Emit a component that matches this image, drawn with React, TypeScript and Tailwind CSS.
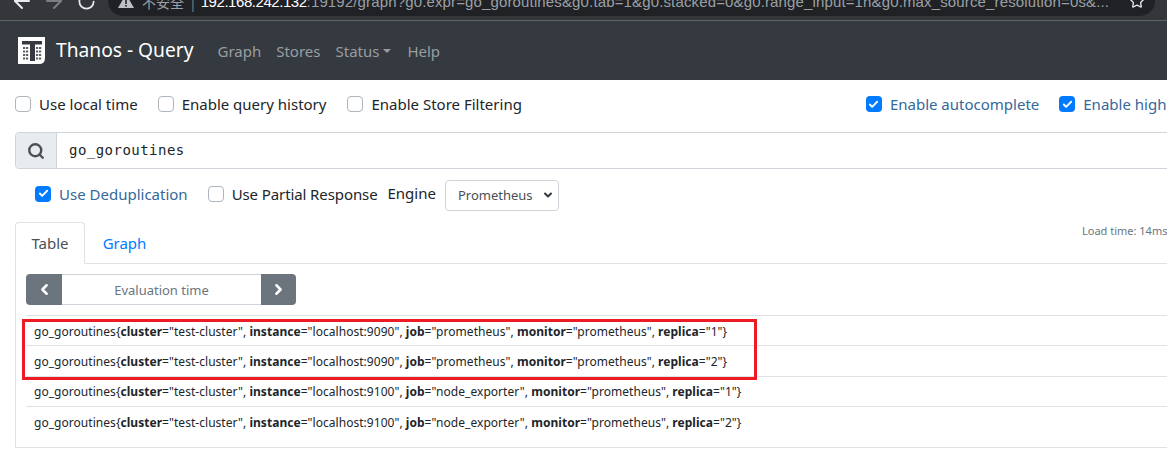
import React from "react";
import { Search, ChevronLeft, ChevronRight, ArrowLeft, ArrowRight, RotateCw, Star, Check, ChevronDown } from "lucide-react";

function Box({ checked, className = "" }: { checked?: boolean; className?: string }) {
  return checked ? (
    <span className={"w-4 h-4 rounded-[4px] bg-[#007bff] flex items-center justify-center shrink-0 " + className}>
      <Check size={11} strokeWidth={4} className="text-white" />
    </span>
  ) : (
    <span className={"w-4 h-4 rounded-[4px] bg-white border border-[#adb5bd] shrink-0 " + className} />
  );
}

function Opt({ label, checked, className = "" }: { label: string; checked?: boolean; className?: string }) {
  return (
    <div className={"flex items-center gap-2 shrink-0 " + className}>
      <Box checked={checked} />
      <span className={"text-[15px] leading-6 whitespace-nowrap " + (checked ? "text-[#35689b]" : "text-[#212529]")}>{label}</span>
    </div>
  );
}

function Row({ inst, job, rep }: { inst: string; job: string; rep: string }) {
  const L = ({ children }: { children: React.ReactNode }) => <b className="font-bold">{children}</b>;
  return (
    <div className="h-[30.4px] pl-[8px] pt-[2px] flex items-center border-t border-[#dee2e6] text-[12px] tracking-[0.04px] text-[#212529] whitespace-nowrap">
      <span>
        go_goroutines{"{"}<L>cluster</L>="test-cluster", <L>instance</L>="{inst}", <L>job</L>="{job}", <L>monitor</L>="prometheus", <L>replica</L>="{rep}"{"}"}
      </span>
    </div>
  );
}

function Logo() {
  return (
    <svg width="27" height="27" viewBox="0 0 27 27" className="shrink-0">
      <path d="M0 0H27V21Q27 27 21 27H0Z" fill="#fff" />
      <rect x="4" y="4" width="20" height="3.5" fill="#343a40" />
      <rect x="12" y="4" width="5" height="20" fill="#343a40" />
      {[10, 13.5, 17, 20.5].map((y) =>
        [5, 8, 18, 21].map((x) => <rect key={x + "-" + y} x={x} y={y} width="2.2" height="2" fill="#5b6066" />)
      )}
    </svg>
  );
}

export default function App() {
  return (
    <div className="w-[1167px] h-[476px] overflow-hidden bg-white flex flex-col font-['Noto_Sans','Open_Sans',sans-serif]">
      {/* browser toolbar, cropped at the top */}
      <div className="h-[21px] shrink-0 bg-[#35363a] border-b border-[#5f6368] overflow-hidden">
        <div className="-mt-[14px] h-[30px] flex items-center">
          <ArrowLeft size={24} strokeWidth={2} className="ml-[10px] shrink-0 text-[#e8eaed]" />
          <ArrowRight size={24} strokeWidth={2} className="ml-[8px] shrink-0 text-[#7b7d80]" />
          <RotateCw size={19} strokeWidth={2.2} className="ml-[11px] shrink-0 text-[#e8eaed]" />
          <div className="ml-[12px] w-[1047px] h-[30px] shrink-0 rounded-[15px] bg-[#202124] flex items-center pl-[10px] whitespace-nowrap overflow-hidden">
            <svg width="16" height="16" viewBox="0 0 16 16" className="shrink-0">
              <path d="M8 1L16 15H0Z" fill="#bdc1c6" />
              <rect x="7.2" y="6" width="1.6" height="5" fill="#202124" />
              <rect x="7.2" y="12" width="1.6" height="1.6" fill="#202124" />
            </svg>
            <span className="ml-[8px] mt-[2px] text-[#9aa0a6] font-['Noto_Sans_CJK_SC',sans-serif] text-[14px]">不安全</span>
            <span className="ml-[5px] mt-[2px] text-[14px] text-[#7b7d80]">|</span>
            <span className="ml-[4px] mt-[3px] text-white font-['Liberation_Sans',sans-serif] text-[15px] tracking-[-0.45px]">192.168.242.132</span>
            <span className="mt-[3px] text-[#9aa0a6] font-['Liberation_Sans',sans-serif] text-[15px] tracking-[0.14px]">:19192/graph?g0.expr=go_goroutines&amp;g0.tab=1&amp;g0.stacked=0&amp;g0.range_input=1h&amp;g0.max_source_resolution=0s&amp;...</span>
          </div>
          <Star size={16} strokeWidth={2} className="-ml-[26px] shrink-0 text-[#e8eaed]" />
        </div>
      </div>

      {/* navbar */}
      <nav className="h-[59px] shrink-0 bg-[#343a40] flex items-center pl-[18px]">
        <Logo />
        <span className="ml-[11px] text-[19.2px] text-white whitespace-nowrap">Thanos - Query</span>
        <div className="ml-[24px] mt-[1px] flex items-center gap-[16px] text-[15px] text-[#9a9da0]">
          <span>Graph</span>
          <span className="-ml-[1px]">Stores</span>
          <span className="-ml-[1px] flex items-center gap-1">
            Status
            <span className="w-0 h-0 border-x-[4.5px] border-x-transparent border-t-[4.5px] border-t-[#9a9da0]" />
          </span>
          <span>Help</span>
        </div>
      </nav>

      {/* options */}
      <div className="h-[48px] shrink-0 flex items-center pl-[15px]">
        <Opt label="Use local time" />
        <Opt label="Enable query history" className="ml-[20px]" />
        <Opt label="Enable Store Filtering" className="ml-[21px]" />
        <Opt label="Enable autocomplete" checked className="ml-[344px]" />
        <Opt label="Enable highlighting" checked className="ml-[20px]" />
      </div>

      {/* expression */}
      <div className="ml-[15px] w-[1200px] h-[37px] mt-[4px] shrink-0 flex border border-[#ced4da] rounded-[4px]">
        <div className="w-[41px] bg-[#e9ecef] border-r border-[#ced4da] flex items-center justify-center rounded-l-[4px]">
          <Search size={18} strokeWidth={3.2} className="text-[#495057]" />
        </div>
        <div className="pl-[12px] flex items-center text-[14px] tracking-[0.47px] text-[#212529] font-['DejaVu_Sans_Mono',monospace] -mt-[1px]">go_goroutines</div>
      </div>

      {/* query options */}
      <div className="h-[32px] mt-[10px] shrink-0 flex items-center pl-[35px]">
        <Opt label="Use Deduplication" checked className="-mt-[3px]" />
        <Opt label="Use Partial Response" className="ml-[20px] -mt-[3px] tracking-[-0.1px]" />
        <span className="ml-[10px] -mt-[3px] text-[15px] text-[#212529]">Engine</span>
        <div className="ml-[9px] w-[114px] h-[31px] rounded-[4px] border border-[#ced4da] flex items-center pl-[12px] pr-[4px] justify-between text-[13px] text-[#495057]">
          <span className="mt-[1px]">Prometheus</span>
          <ChevronDown size={12} strokeWidth={4} className="text-[#343a40]" />
        </div>
      </div>

      {/* tabs */}
      <div className="mt-[11px] shrink-0 h-[42px] ml-[15px] flex items-end border-b border-[#dee2e6] relative">
        <div className="w-[70px] h-[42px] -mb-px bg-white border border-b-white border-[#dee2e6] rounded-t-[4px] flex items-center justify-center text-[15px] text-[#495057]">Table</div>
        <div className="w-[79px] h-[41px] pt-[2px] flex items-center justify-center text-[15px] text-[#007bff]">Graph</div>
        <span className="absolute left-[1067px] top-[1px] text-[11px] text-[#6c757d] whitespace-nowrap">Load time: 14ms</span>
      </div>

      {/* panel */}
      <div className="ml-[15px] w-[1200px] h-[184px] border-l border-b border-[#dee2e6] pl-[10px] pt-[10px] shrink-0">
        <div className="flex h-[31px] w-[270px] rounded-[4px]">
          <div className="w-[36px] bg-[#6c757d] rounded-l-[4px] flex items-center justify-center">
            <ChevronLeft size={17} strokeWidth={3.5} className="text-white" />
          </div>
          <div className="flex-1 pt-[2px] border-y border-[#ced4da] flex items-center justify-center text-[13px] text-[#6c757d]">Evaluation time</div>
          <div className="w-[35px] bg-[#6c757d] rounded-r-[4px] flex items-center justify-center">
            <ChevronRight size={17} strokeWidth={3.5} className="text-white" />
          </div>
        </div>
        <div className="mt-[10px] relative">
          <Row inst="localhost:9090" job="prometheus" rep="1" />
          <Row inst="localhost:9090" job="prometheus" rep="2" />
          <Row inst="localhost:9100" job="node_exporter" rep="1" />
          <Row inst="localhost:9100" job="node_exporter" rep="2" />
          <div className="absolute left-[-4px] top-[4px] w-[735px] h-[61px] border-[3px] border-[#ed1c24]" />
        </div>
      </div>
    </div>
  );
}
